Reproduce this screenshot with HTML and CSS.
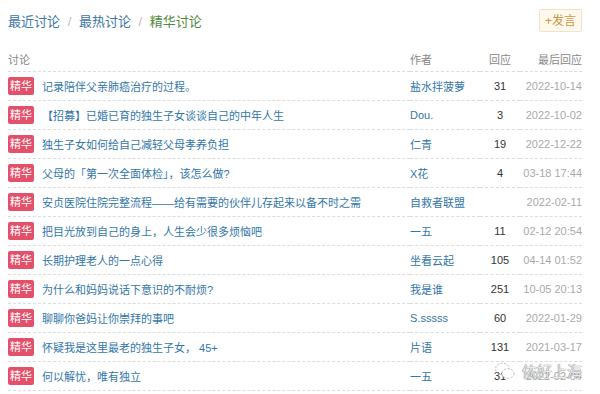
FILE: index.html
```html
<!DOCTYPE html>
<html lang="zh-CN">
<head>
    <meta charset="UTF-8">
    <meta name="viewport" content="width=device-width, initial-scale=1.0">
    <title>精华讨论</title>
    <link rel="stylesheet" href="styles.css">
</head>
<body>
    <div class="wrap">
        <!--tabs + post button-->
        <div class="topbar">
            <div class="tabs">
                <a href="#" class="tab">最近讨论</a>
                <span class="sep">/</span>
                <a href="#" class="tab">最热讨论</a>
                <span class="sep">/</span>
                <span class="tab active">精华讨论</span>
            </div>
            <a href="#" class="post-btn">+发言</a>
        </div>

        <table class="topics">
            <colgroup>
                <col class="c-title">
                <col class="c-author">
                <col class="c-count">
                <col class="c-time">
            </colgroup>
            <thead>
                <tr>
                    <th>讨论</th>
                    <th>作者</th>
                    <th class="count">回应</th>
                    <th class="time">最后回应</th>
                </tr>
            </thead>
            <tbody>
                <tr>
                    <td><span class="badge">精华</span><a href="#">记录陪伴父亲肺癌治疗的过程。</a></td>
                    <td><a href="#">盐水拌菠萝</a></td>
                    <td class="count">31</td>
                    <td class="time">2022-10-14</td>
                </tr>
                <tr>
                    <td><span class="badge">精华</span><a href="#">【招募】已婚已育的独生子女谈谈自己的中年人生</a></td>
                    <td><a href="#">Dou.</a></td>
                    <td class="count">3</td>
                    <td class="time">2022-10-02</td>
                </tr>
                <tr>
                    <td><span class="badge">精华</span><a href="#">独生子女如何给自己减轻父母孝养负担</a></td>
                    <td><a href="#">仁青</a></td>
                    <td class="count">19</td>
                    <td class="time">2022-12-22</td>
                </tr>
                <tr>
                    <td><span class="badge">精华</span><a href="#">父母的「第一次全面体检」，该怎么做?</a></td>
                    <td><a href="#">X花</a></td>
                    <td class="count">4</td>
                    <td class="time">03-18 17:44</td>
                </tr>
                <tr>
                    <td><span class="badge">精华</span><a href="#">安贞医院住院完整流程——给有需要的伙伴儿存起来以备不时之需</a></td>
                    <td><a href="#">自救者联盟</a></td>
                    <td class="count"></td>
                    <td class="time">2022-02-11</td>
                </tr>
                <tr>
                    <td><span class="badge">精华</span><a href="#">把目光放到自己的身上，人生会少很多烦恼吧</a></td>
                    <td><a href="#">一五</a></td>
                    <td class="count">11</td>
                    <td class="time">02-12 20:54</td>
                </tr>
                <tr>
                    <td><span class="badge">精华</span><a href="#">长期护理老人的一点心得</a></td>
                    <td><a href="#">坐看云起</a></td>
                    <td class="count">105</td>
                    <td class="time">04-14 01:52</td>
                </tr>
                <tr>
                    <td><span class="badge">精华</span><a href="#">为什么和妈妈说话下意识的不耐烦?</a></td>
                    <td><a href="#">我是谁</a></td>
                    <td class="count">251</td>
                    <td class="time">10-05 20:13</td>
                </tr>
                <tr>
                    <td><span class="badge">精华</span><a href="#">聊聊你爸妈让你崇拜的事吧</a></td>
                    <td><a href="#">S.sssss</a></td>
                    <td class="count">60</td>
                    <td class="time">2022-01-29</td>
                </tr>
                <tr>
                    <td><span class="badge">精华</span><a href="#">怀疑我是这里最老的独生子女， 45+</a></td>
                    <td><a href="#">片语</a></td>
                    <td class="count">131</td>
                    <td class="time">2021-03-17</td>
                </tr>
                <tr>
                    <td><span class="badge">精华</span><a href="#">何以解忧，唯有独立</a></td>
                    <td><a href="#">一五</a></td>
                    <td class="count">31</td>
                    <td class="time">2022-02-04</td>
                </tr>
            </tbody>
        </table>
    </div>

    <!-- watermark over the last row -->
    <div class="watermark">
        <svg width="22" height="20" viewBox="0 0 22 20">
            <ellipse cx="8.5" cy="8" rx="7" ry="5.8" fill="none" stroke="#bbb" stroke-width="1" stroke-dasharray="2 1.5"/>
            <ellipse cx="14" cy="12.5" rx="6" ry="4.8" fill="#fff" stroke="#bbb" stroke-width="1" stroke-dasharray="2 1.5"/>
        </svg>
        <span>侬好上海</span>
    </div>
</body>
</html>
```

FILE: styles.css
```css
body {
    margin: 0;
    background-color: #fff;
    font-family: "Liberation Sans", "Noto Sans CJK SC", sans-serif;
    font-size: 11px;
    color: #494949;
}

a {
    color: #37a;
    text-decoration: none;
}

.wrap {
    width: 574px;
    padding: 9px 0 0 8px;
}

.topbar {
    display: flex;
    justify-content: space-between;
    align-items: center;
    height: 23px;
}

.tabs {
    font-size: 13px;
}

.tab {
    color: #3d77a6;
}

.tab.active {
    color: #4e8a3a;
}

.sep {
    color: #bbb;
    margin: 0 4px;
}

.post-btn {
    display: inline-block;
    height: 23px;
    line-height: 23px;
    padding: 0 5px;
    font-size: 12px;
    color: #c9973f;
    background-color: #fff8ec;
    border: 1px solid #f1e3c8;
    border-radius: 2px;
    box-sizing: border-box;
}

/* topic table */
.topics {
    width: 574px;
    margin-top: 14px;
    border-collapse: collapse;
    table-layout: fixed;
}

.c-title { width: 402px; }
.c-author { width: 70px; }
.c-count { width: 40px; }
.c-time { width: 62px; }

.topics th {
    height: 25px;
    padding: 0;
    font-weight: normal;
    text-align: left;
    color: #888;
    border-bottom: 1px dashed #ddd;
}

.topics td {
    height: 28px;
    padding: 0;
    border-bottom: 1px dashed #ddd;
    white-space: nowrap;
    overflow: hidden;
}

.topics .count {
    text-align: center;
}

td.count {
    color: #333;
}

.topics .time {
    text-align: right;
}

td.time {
    color: #aaa;
}

.badge {
    display: inline-block;
    width: 26px;
    height: 18px;
    line-height: 18px;
    margin-right: 8px;
    text-align: center;
    vertical-align: middle;
    color: #fff;
    background-color: #e4506a;
    border-radius: 2px;
}

.badge + a {
    vertical-align: middle;
}

.watermark {
    position: absolute;
    left: 494px;
    top: 360px;
    display: flex;
    align-items: center;
    gap: 6px;
    font-size: 15px;
    color: rgba(255, 255, 255, 0.85);
    text-shadow: 0 0 1px #777, 0 0 1px #777;
}
```
